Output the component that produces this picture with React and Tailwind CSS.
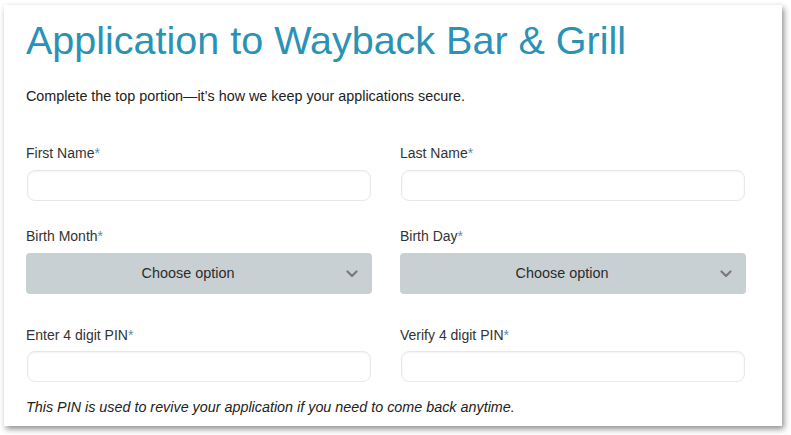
import React from 'react';

const font = { fontFamily: '"Liberation Sans", Arial, sans-serif' };

function Label({ children }) {
  return (
    <label className="block text-[14px] leading-5 text-[#333]">
      {children}
      <span className="text-[#5f8ea6]">*</span>
    </label>
  );
}

function TextInput() {
  return (
    <input
      type="text"
      className="block w-full h-[31px] rounded-lg border border-[#e8e8e8] bg-white shadow-[inset_0_1px_2px_rgba(0,0,0,0.05)] outline-none"
    />
  );
}

function Chevron() {
  return (
    <svg width="12" height="8" viewBox="0 0 12 8" className="text-[#7a7a7a]">
      <path d="M1.5 1.5 L6 6 L10.5 1.5" fill="none" stroke="currentColor" strokeWidth="2.2" strokeLinecap="round" strokeLinejoin="round" />
    </svg>
  );
}

function SelectBox() {
  return (
    <div className="relative flex h-[41px] items-center justify-center rounded bg-[#c8d0d3] pr-[22px] text-[14.4px] text-[#2b2b2b]">
      Choose option
      <span className="absolute right-[14px] top-[17px] flex">
        <Chevron />
      </span>
    </div>
  );
}

export default function App() {
  return (
    <div className="min-h-[435px] bg-white pt-[5px] pl-[4px]" style={font}>
      <div className="w-[778px] h-[421px] bg-white pl-[22px] pr-[36px] pt-[12px] shadow-[2px_3px_6px_rgba(0,0,0,0.45)]">
        <h1 className="text-[39.5px] leading-[46px] text-[#2a93b5]">Application to Wayback Bar &amp; Grill</h1>
        <p className="mt-[23px] text-[14.35px] leading-5 text-[#222]">
          Complete the top portion—it’s how we keep your applications secure.
        </p>

        <div className="mt-[37px] grid grid-cols-2 gap-x-[28px]">
          <div>
            <Label>First Name</Label>
            <div className="mt-[7px] pl-px pr-px"><TextInput /></div>
          </div>
          <div>
            <Label>Last Name</Label>
            <div className="mt-[7px] pl-px pr-px"><TextInput /></div>
          </div>

          <div className="mt-[25px]">
            <Label>Birth Month</Label>
            <div className="mt-[7px]"><SelectBox /></div>
          </div>
          <div className="mt-[25px]">
            <Label>Birth Day</Label>
            <div className="mt-[7px]"><SelectBox /></div>
          </div>

          <div className="mt-[31px]">
            <Label>Enter 4 digit PIN</Label>
            <div className="mt-[6px] pl-px pr-px"><TextInput /></div>
          </div>
          <div className="mt-[31px]">
            <Label>Verify 4 digit PIN</Label>
            <div className="mt-[6px] pl-px pr-px"><TextInput /></div>
          </div>
        </div>

        <p className="mt-[15px] text-[14.35px] leading-5 italic text-[#222]">
          This PIN is used to revive your application if you need to come back anytime.
        </p>
      </div>
    </div>
  );
}
